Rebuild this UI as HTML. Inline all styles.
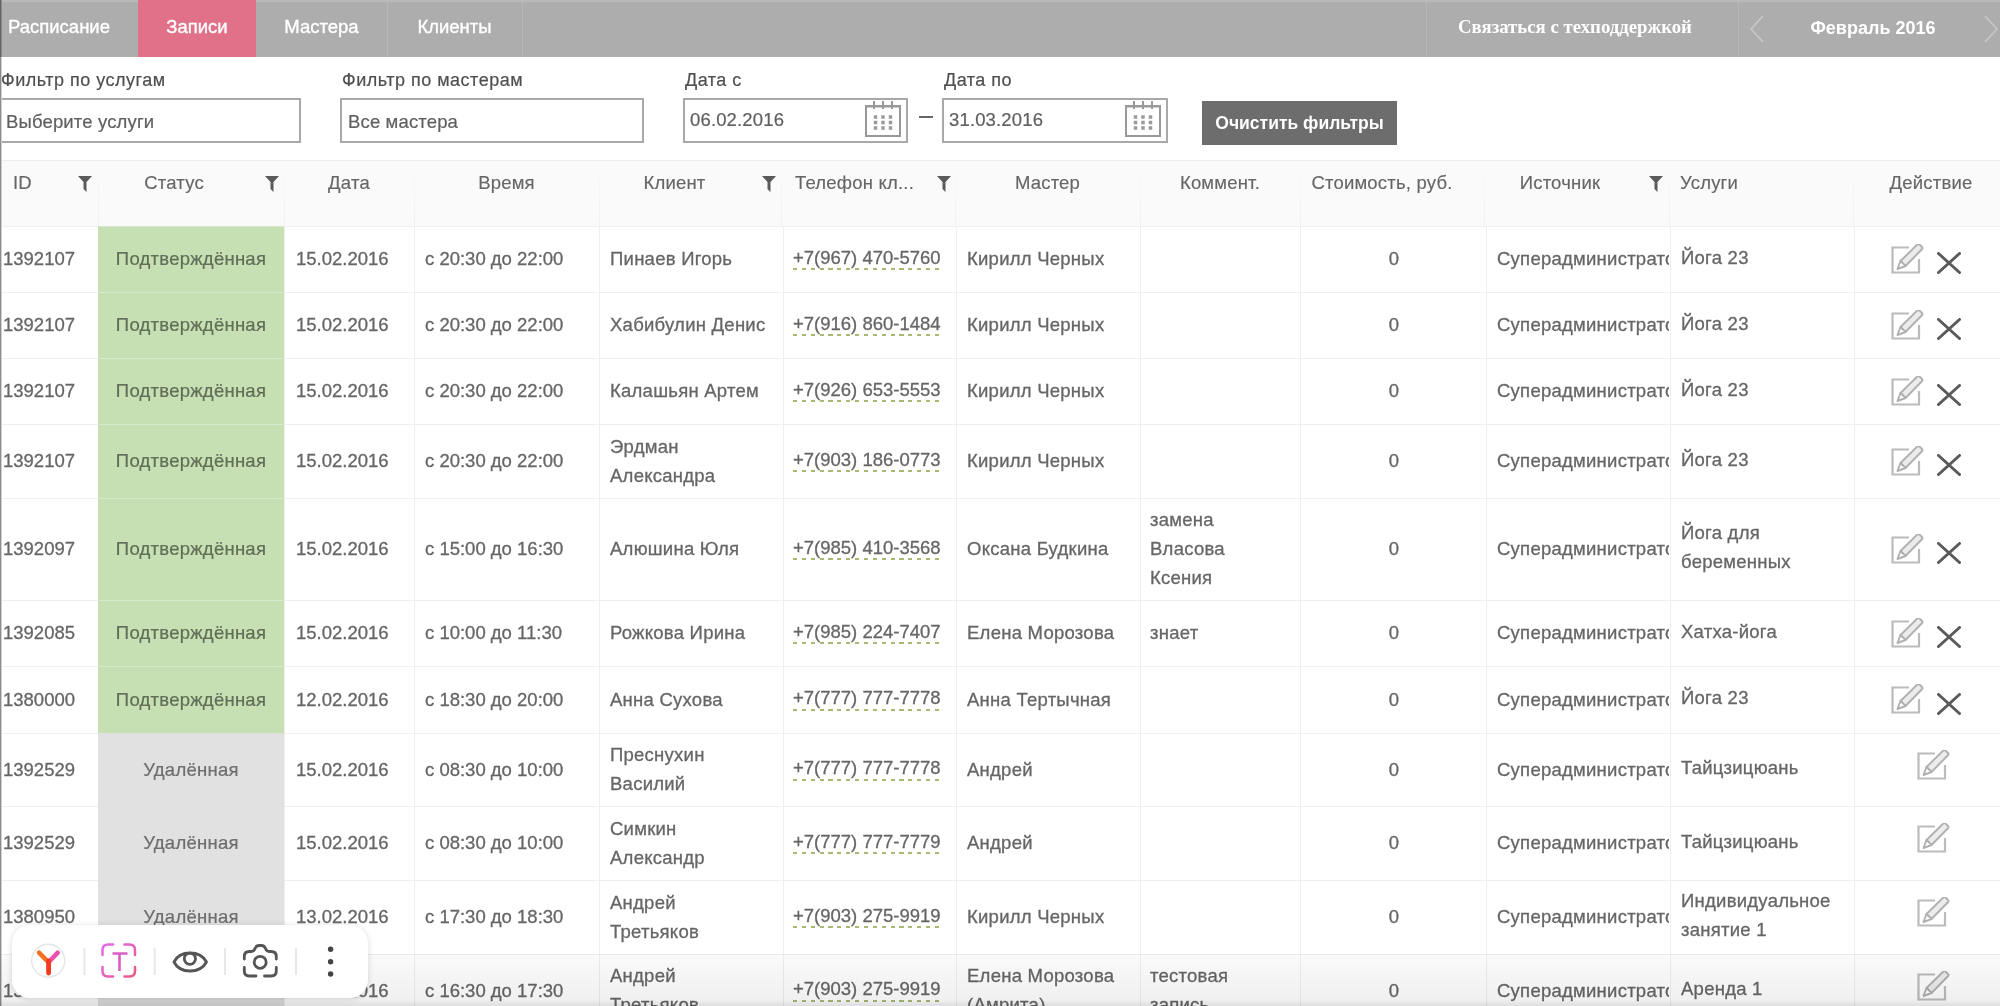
<!DOCTYPE html><html><head><meta charset="utf-8"><style>
*{margin:0;padding:0;box-sizing:border-box}
html,body{width:2000px;height:1006px;overflow:hidden;background:#fff}
body{position:relative;font-family:"Liberation Sans",sans-serif;color:#666;filter:blur(0.4px)}
.a{position:absolute}
.t{position:absolute;white-space:nowrap;font-size:18.5px;line-height:29px;letter-spacing:0.25px;-webkit-text-stroke:0.3px #666}
.dg{letter-spacing:0}
.nav{position:absolute;left:0;top:0;width:2000px;height:57px;background:#adadad}
.nt{position:absolute;top:0;height:57px;line-height:54px;color:#fff;font-size:18.5px;text-align:center;white-space:nowrap;-webkit-text-stroke:0.35px #fff}
.lbl{position:absolute;font-size:18px;color:#4f4f4f;white-space:nowrap;line-height:22px;letter-spacing:0.5px;-webkit-text-stroke:0.2px #4f4f4f}
.inp{position:absolute;border:2px solid #a9a9a9;background:#fff}
.ph{position:absolute;font-size:18.5px;color:#5f5f5f;white-space:nowrap;line-height:22px;letter-spacing:0.15px;-webkit-text-stroke:0.2px #5f5f5f}
.hd{position:absolute;top:161px;height:65px;background:#fafafa}
.ht{position:absolute;top:170px;font-size:18.5px;color:#666;white-space:nowrap;line-height:26px;letter-spacing:0.2px;-webkit-text-stroke:0.15px #666}
.cell{position:absolute;overflow:hidden}
.ph2{border-bottom:2px dashed #9ccc65;line-height:22px;display:inline-block}
</style></head><body>
<div class="nav"></div>
<div class="a" style="left:0;top:0;width:2000px;height:2px;background:#b9b9b9"></div>
<div class="a" style="left:138px;top:0;width:118px;height:57px;background:#e07189"></div>
<div class="nt" style="left:0;width:118px">Расписание</div>
<div class="nt" style="left:138px;width:118px">Записи</div>
<div class="nt" style="left:256px;width:131px">Мастера</div>
<div class="nt" style="left:387px;width:135px">Клиенты</div>
<div class="a" style="left:387px;top:2px;width:1px;height:55px;background:#b8b8b8"></div>
<div class="a" style="left:522px;top:2px;width:1px;height:55px;background:#b8b8b8"></div>
<div class="a" style="left:1426px;top:2px;width:1px;height:55px;background:#b8b8b8"></div>
<div class="a" style="left:1738px;top:2px;width:1px;height:55px;background:#b8b8b8"></div>
<div class="nt" style="left:1419px;width:312px;font-family:'Liberation Serif',serif;font-weight:bold;font-size:18.8px;-webkit-text-stroke:0;line-height:53px">Связаться с техподдержкой</div>
<div class="nt" style="left:1768px;width:210px;font-weight:bold;font-size:18px;-webkit-text-stroke:0;line-height:56px">Февраль 2016</div>
<svg class="a" style="left:1748px;top:14px" width="18" height="30"><path d="M15 2 L3 15 L15 28" fill="none" stroke="#c8c8c8" stroke-width="1.6"/></svg>
<svg class="a" style="left:1982px;top:14px" width="18" height="30"><path d="M3 2 L15 15 L3 28" fill="none" stroke="#c8c8c8" stroke-width="1.6"/></svg>
<div class="lbl" style="left:1px;top:69px">Фильтр по услугам</div>
<div class="inp" style="left:0;top:98px;width:301px;height:45px"></div>
<div class="ph" style="left:6px;top:111px">Выберите услуги</div>
<div class="lbl" style="left:342px;top:69px">Фильтр по мастерам</div>
<div class="inp" style="left:340px;top:98px;width:304px;height:45px"></div>
<div class="ph" style="left:348px;top:111px">Все мастера</div>
<div class="lbl" style="left:685px;top:69px">Дата с</div>
<div class="inp" style="left:683px;top:98px;width:225px;height:45px"></div>
<div class="ph" style="left:690px;top:109px">06.02.2016</div>
<div class="lbl" style="left:944px;top:69px">Дата по</div>
<div class="inp" style="left:942px;top:98px;width:226px;height:45px"></div>
<div class="ph" style="left:949px;top:109px">31.03.2016</div>
<div class="a" style="left:919px;top:116px;width:14px;height:2px;background:#666"></div>
<svg class="a" style="left:865px;top:101px" width="36" height="36" viewBox="0 0 36 36"><rect x="1" y="5" width="34" height="30" fill="none" stroke="#999" stroke-width="2"/><line x1="9" y1="0" x2="9" y2="8" stroke="#999" stroke-width="2"/><line x1="18" y1="0" x2="18" y2="8" stroke="#999" stroke-width="2"/><line x1="27" y1="0" x2="27" y2="8" stroke="#999" stroke-width="2"/><line x1="1" y1="6" x2="35" y2="6" stroke="#999" stroke-width="1"/><rect x="8.75" y="14.25" width="3.5" height="3.5" fill="#9a9a9a"/><rect x="16.25" y="14.25" width="3.5" height="3.5" fill="#9a9a9a"/><rect x="23.75" y="14.25" width="3.5" height="3.5" fill="#9a9a9a"/><rect x="8.75" y="19.75" width="3.5" height="3.5" fill="#9a9a9a"/><rect x="16.25" y="19.75" width="3.5" height="3.5" fill="#9a9a9a"/><rect x="23.75" y="19.75" width="3.5" height="3.5" fill="#9a9a9a"/><rect x="8.75" y="25.25" width="3.5" height="3.5" fill="#9a9a9a"/><rect x="16.25" y="25.25" width="3.5" height="3.5" fill="#9a9a9a"/><rect x="23.75" y="25.25" width="3.5" height="3.5" fill="#9a9a9a"/></svg>
<svg class="a" style="left:1125px;top:101px" width="36" height="36" viewBox="0 0 36 36"><rect x="1" y="5" width="34" height="30" fill="none" stroke="#999" stroke-width="2"/><line x1="9" y1="0" x2="9" y2="8" stroke="#999" stroke-width="2"/><line x1="18" y1="0" x2="18" y2="8" stroke="#999" stroke-width="2"/><line x1="27" y1="0" x2="27" y2="8" stroke="#999" stroke-width="2"/><line x1="1" y1="6" x2="35" y2="6" stroke="#999" stroke-width="1"/><rect x="8.75" y="14.25" width="3.5" height="3.5" fill="#9a9a9a"/><rect x="16.25" y="14.25" width="3.5" height="3.5" fill="#9a9a9a"/><rect x="23.75" y="14.25" width="3.5" height="3.5" fill="#9a9a9a"/><rect x="8.75" y="19.75" width="3.5" height="3.5" fill="#9a9a9a"/><rect x="16.25" y="19.75" width="3.5" height="3.5" fill="#9a9a9a"/><rect x="23.75" y="19.75" width="3.5" height="3.5" fill="#9a9a9a"/><rect x="8.75" y="25.25" width="3.5" height="3.5" fill="#9a9a9a"/><rect x="16.25" y="25.25" width="3.5" height="3.5" fill="#9a9a9a"/><rect x="23.75" y="25.25" width="3.5" height="3.5" fill="#9a9a9a"/></svg>
<div class="a" style="left:1202px;top:101px;width:195px;height:44px;background:#6d6d6d"></div>
<div class="a" style="left:1202px;top:101px;width:195px;height:44px;line-height:44px;text-align:center;color:#fff;font-weight:bold;font-size:17.5px;white-space:nowrap">Очистить фильтры</div>
<div class="a" style="left:0;top:160px;width:2000px;height:1px;background:#f1ebeb"></div>
<div class="hd" style="left:0;width:2000px"></div>
<div class="a" style="left:98px;top:161px;width:1px;height:65px;background:linear-gradient(#fafafa,#f0f0f0)"></div>
<div class="a" style="left:284px;top:161px;width:1px;height:65px;background:linear-gradient(#fafafa,#f0f0f0)"></div>
<div class="a" style="left:414px;top:161px;width:1px;height:65px;background:linear-gradient(#fafafa,#f0f0f0)"></div>
<div class="a" style="left:599px;top:161px;width:1px;height:65px;background:linear-gradient(#fafafa,#f0f0f0)"></div>
<div class="a" style="left:781px;top:161px;width:1px;height:65px;background:linear-gradient(#fafafa,#f0f0f0)"></div>
<div class="a" style="left:955px;top:161px;width:1px;height:65px;background:linear-gradient(#fafafa,#f0f0f0)"></div>
<div class="a" style="left:1140px;top:161px;width:1px;height:65px;background:linear-gradient(#fafafa,#f0f0f0)"></div>
<div class="a" style="left:1300px;top:161px;width:1px;height:65px;background:linear-gradient(#fafafa,#f0f0f0)"></div>
<div class="a" style="left:1484px;top:161px;width:1px;height:65px;background:linear-gradient(#fafafa,#f0f0f0)"></div>
<div class="a" style="left:1669px;top:161px;width:1px;height:65px;background:linear-gradient(#fafafa,#f0f0f0)"></div>
<div class="a" style="left:1853px;top:161px;width:1px;height:65px;background:linear-gradient(#fafafa,#f0f0f0)"></div>
<div class="ht" style="left:13px">ID</div>
<div class="ht" style="left:98px;width:152px;text-align:center">Статус</div>
<div class="ht" style="left:284px;width:130px;text-align:center">Дата</div>
<div class="ht" style="left:414px;width:185px;text-align:center">Время</div>
<div class="ht" style="left:599px;width:151px;text-align:center">Клиент</div>
<div class="ht" style="left:795px">Телефон кл...</div>
<div class="ht" style="left:955px;width:185px;text-align:center">Мастер</div>
<div class="ht" style="left:1140px;width:160px;text-align:center">Коммент.</div>
<div class="ht" style="left:1300px;width:164px;text-align:center">Стоимость, руб.</div>
<div class="ht" style="left:1484px;width:152px;text-align:center">Источник</div>
<div class="ht" style="left:1680px">Услуги</div>
<div class="ht" style="left:1862px;width:138px;text-align:center">Действие</div>
<svg class="a" style="left:78px;top:176px" width="14" height="16" viewBox="0 0 14 16"><path d="M0 0 H14 L8.5 6 V16 L5.5 13 V6 Z" fill="#5a5a5a"/></svg>
<svg class="a" style="left:265px;top:176px" width="14" height="16" viewBox="0 0 14 16"><path d="M0 0 H14 L8.5 6 V16 L5.5 13 V6 Z" fill="#5a5a5a"/></svg>
<svg class="a" style="left:762px;top:176px" width="14" height="16" viewBox="0 0 14 16"><path d="M0 0 H14 L8.5 6 V16 L5.5 13 V6 Z" fill="#5a5a5a"/></svg>
<svg class="a" style="left:937px;top:176px" width="14" height="16" viewBox="0 0 14 16"><path d="M0 0 H14 L8.5 6 V16 L5.5 13 V6 Z" fill="#5a5a5a"/></svg>
<svg class="a" style="left:1649px;top:176px" width="14" height="16" viewBox="0 0 14 16"><path d="M0 0 H14 L8.5 6 V16 L5.5 13 V6 Z" fill="#5a5a5a"/></svg>
<div class="a" style="left:98px;top:226px;width:1px;height:780px;background:#efefef"></div>
<div class="a" style="left:284px;top:226px;width:1px;height:780px;background:#efefef"></div>
<div class="a" style="left:414px;top:226px;width:1px;height:780px;background:#efefef"></div>
<div class="a" style="left:599px;top:226px;width:1px;height:780px;background:#efefef"></div>
<div class="a" style="left:783px;top:226px;width:1px;height:780px;background:#efefef"></div>
<div class="a" style="left:956px;top:226px;width:1px;height:780px;background:#efefef"></div>
<div class="a" style="left:1140px;top:226px;width:1px;height:780px;background:#efefef"></div>
<div class="a" style="left:1300px;top:226px;width:1px;height:780px;background:#efefef"></div>
<div class="a" style="left:1486px;top:226px;width:1px;height:780px;background:#efefef"></div>
<div class="a" style="left:1670px;top:226px;width:1px;height:780px;background:#efefef"></div>
<div class="a" style="left:1854px;top:226px;width:1px;height:780px;background:#efefef"></div>
<div class="a" style="left:0;top:226px;width:2000px;height:1px;background:#efefef"></div>
<div class="a" style="left:98px;top:227px;width:186px;height:65px;background:#c7e0b3"></div>
<div class="a" style="left:98px;top:226px;width:186px;height:1px;background:#d8e8cb"></div>
<div class="t dg" style="left:3px;top:244.0px">1392107</div>
<div class="t" style="left:98px;top:244.0px;width:186px;text-align:center;color:rgba(0,0,0,0.5);-webkit-text-stroke:0.2px rgba(0,0,0,0.5)">Подтверждённая</div>
<div class="t dg" style="left:296px;top:244.0px">15.02.2016</div>
<div class="t dg" style="left:425px;top:244.0px">с 20:30 до 22:00</div>
<div class="t" style="left:610px;top:244.0px">Пинаев Игорь</div>
<div class="t dg" style="left:793px;top:242.5px">+7(967) 470-5760</div>
<div class="a" style="left:793px;top:268.0px;width:147px;height:2px;background:repeating-linear-gradient(90deg,#a6ba74 0 4px,rgba(255,255,255,0) 4px 8.875px)"></div>
<div class="t" style="left:967px;top:244.0px">Кирилл Черных</div>
<div class="t dg" style="left:1302px;top:244.0px;width:184px;text-align:center">0</div>
<div class="t" style="left:1497px;top:244.0px;width:172px;overflow:hidden">Суперадминистратор</div>
<div class="t" style="left:1681px;top:242.5px">Йога 23</div>
<svg class="a" style="left:1891px;top:243.7px" width="34" height="32" viewBox="0 -1 34 32"><path d="M18 2.5 H1.5 V27.5 H28 V14" fill="none" stroke="#bbbbbb" stroke-width="2.2"/><path d="M9.5 16 L26.5 -0.7 Q27.5 -1.5 28.5 -0.5 L31 2 Q32 3 31.2 4 L14.5 21 Z" fill="#ececec" stroke="#b0b0b0" stroke-width="1.9" stroke-linejoin="round"/><path d="M6.5 24 L9.5 16 L14.5 21 Z" fill="#fff" stroke="#b0b0b0" stroke-width="1.9" stroke-linejoin="round"/></svg>
<svg class="a" style="left:1937px;top:252.0px" width="24" height="22" viewBox="0 0 24 22"><path d="M1.5 1.5 L22.5 20.5 M22.5 1.5 L1.5 20.5" stroke="#5a5a5a" stroke-width="3" stroke-linecap="round"/></svg>
<div class="a" style="left:0;top:292px;width:2000px;height:1px;background:#efefef"></div>
<div class="a" style="left:98px;top:293px;width:186px;height:65px;background:#c7e0b3"></div>
<div class="a" style="left:98px;top:292px;width:186px;height:1px;background:#d8e8cb"></div>
<div class="t dg" style="left:3px;top:310.0px">1392107</div>
<div class="t" style="left:98px;top:310.0px;width:186px;text-align:center;color:rgba(0,0,0,0.5);-webkit-text-stroke:0.2px rgba(0,0,0,0.5)">Подтверждённая</div>
<div class="t dg" style="left:296px;top:310.0px">15.02.2016</div>
<div class="t dg" style="left:425px;top:310.0px">с 20:30 до 22:00</div>
<div class="t" style="left:610px;top:310.0px">Хабибулин Денис</div>
<div class="t dg" style="left:793px;top:308.5px">+7(916) 860-1484</div>
<div class="a" style="left:793px;top:334.0px;width:147px;height:2px;background:repeating-linear-gradient(90deg,#a6ba74 0 4px,rgba(255,255,255,0) 4px 8.875px)"></div>
<div class="t" style="left:967px;top:310.0px">Кирилл Черных</div>
<div class="t dg" style="left:1302px;top:310.0px;width:184px;text-align:center">0</div>
<div class="t" style="left:1497px;top:310.0px;width:172px;overflow:hidden">Суперадминистратор</div>
<div class="t" style="left:1681px;top:308.5px">Йога 23</div>
<svg class="a" style="left:1891px;top:309.7px" width="34" height="32" viewBox="0 -1 34 32"><path d="M18 2.5 H1.5 V27.5 H28 V14" fill="none" stroke="#bbbbbb" stroke-width="2.2"/><path d="M9.5 16 L26.5 -0.7 Q27.5 -1.5 28.5 -0.5 L31 2 Q32 3 31.2 4 L14.5 21 Z" fill="#ececec" stroke="#b0b0b0" stroke-width="1.9" stroke-linejoin="round"/><path d="M6.5 24 L9.5 16 L14.5 21 Z" fill="#fff" stroke="#b0b0b0" stroke-width="1.9" stroke-linejoin="round"/></svg>
<svg class="a" style="left:1937px;top:318.0px" width="24" height="22" viewBox="0 0 24 22"><path d="M1.5 1.5 L22.5 20.5 M22.5 1.5 L1.5 20.5" stroke="#5a5a5a" stroke-width="3" stroke-linecap="round"/></svg>
<div class="a" style="left:0;top:358px;width:2000px;height:1px;background:#efefef"></div>
<div class="a" style="left:98px;top:359px;width:186px;height:65px;background:#c7e0b3"></div>
<div class="a" style="left:98px;top:358px;width:186px;height:1px;background:#d8e8cb"></div>
<div class="t dg" style="left:3px;top:376.0px">1392107</div>
<div class="t" style="left:98px;top:376.0px;width:186px;text-align:center;color:rgba(0,0,0,0.5);-webkit-text-stroke:0.2px rgba(0,0,0,0.5)">Подтверждённая</div>
<div class="t dg" style="left:296px;top:376.0px">15.02.2016</div>
<div class="t dg" style="left:425px;top:376.0px">с 20:30 до 22:00</div>
<div class="t" style="left:610px;top:376.0px">Калашьян Артем</div>
<div class="t dg" style="left:793px;top:374.5px">+7(926) 653-5553</div>
<div class="a" style="left:793px;top:400.0px;width:147px;height:2px;background:repeating-linear-gradient(90deg,#a6ba74 0 4px,rgba(255,255,255,0) 4px 8.875px)"></div>
<div class="t" style="left:967px;top:376.0px">Кирилл Черных</div>
<div class="t dg" style="left:1302px;top:376.0px;width:184px;text-align:center">0</div>
<div class="t" style="left:1497px;top:376.0px;width:172px;overflow:hidden">Суперадминистратор</div>
<div class="t" style="left:1681px;top:374.5px">Йога 23</div>
<svg class="a" style="left:1891px;top:375.7px" width="34" height="32" viewBox="0 -1 34 32"><path d="M18 2.5 H1.5 V27.5 H28 V14" fill="none" stroke="#bbbbbb" stroke-width="2.2"/><path d="M9.5 16 L26.5 -0.7 Q27.5 -1.5 28.5 -0.5 L31 2 Q32 3 31.2 4 L14.5 21 Z" fill="#ececec" stroke="#b0b0b0" stroke-width="1.9" stroke-linejoin="round"/><path d="M6.5 24 L9.5 16 L14.5 21 Z" fill="#fff" stroke="#b0b0b0" stroke-width="1.9" stroke-linejoin="round"/></svg>
<svg class="a" style="left:1937px;top:384.0px" width="24" height="22" viewBox="0 0 24 22"><path d="M1.5 1.5 L22.5 20.5 M22.5 1.5 L1.5 20.5" stroke="#5a5a5a" stroke-width="3" stroke-linecap="round"/></svg>
<div class="a" style="left:0;top:424px;width:2000px;height:1px;background:#efefef"></div>
<div class="a" style="left:98px;top:425px;width:186px;height:73px;background:#c7e0b3"></div>
<div class="a" style="left:98px;top:424px;width:186px;height:1px;background:#d8e8cb"></div>
<div class="t dg" style="left:3px;top:446.0px">1392107</div>
<div class="t" style="left:98px;top:446.0px;width:186px;text-align:center;color:rgba(0,0,0,0.5);-webkit-text-stroke:0.2px rgba(0,0,0,0.5)">Подтверждённая</div>
<div class="t dg" style="left:296px;top:446.0px">15.02.2016</div>
<div class="t dg" style="left:425px;top:446.0px">с 20:30 до 22:00</div>
<div class="t" style="left:610px;top:431.5px">Эрдман<br>Александра</div>
<div class="t dg" style="left:793px;top:444.5px">+7(903) 186-0773</div>
<div class="a" style="left:793px;top:470.0px;width:147px;height:2px;background:repeating-linear-gradient(90deg,#a6ba74 0 4px,rgba(255,255,255,0) 4px 8.875px)"></div>
<div class="t" style="left:967px;top:446.0px">Кирилл Черных</div>
<div class="t dg" style="left:1302px;top:446.0px;width:184px;text-align:center">0</div>
<div class="t" style="left:1497px;top:446.0px;width:172px;overflow:hidden">Суперадминистратор</div>
<div class="t" style="left:1681px;top:444.5px">Йога 23</div>
<svg class="a" style="left:1891px;top:445.7px" width="34" height="32" viewBox="0 -1 34 32"><path d="M18 2.5 H1.5 V27.5 H28 V14" fill="none" stroke="#bbbbbb" stroke-width="2.2"/><path d="M9.5 16 L26.5 -0.7 Q27.5 -1.5 28.5 -0.5 L31 2 Q32 3 31.2 4 L14.5 21 Z" fill="#ececec" stroke="#b0b0b0" stroke-width="1.9" stroke-linejoin="round"/><path d="M6.5 24 L9.5 16 L14.5 21 Z" fill="#fff" stroke="#b0b0b0" stroke-width="1.9" stroke-linejoin="round"/></svg>
<svg class="a" style="left:1937px;top:454.0px" width="24" height="22" viewBox="0 0 24 22"><path d="M1.5 1.5 L22.5 20.5 M22.5 1.5 L1.5 20.5" stroke="#5a5a5a" stroke-width="3" stroke-linecap="round"/></svg>
<div class="a" style="left:0;top:498px;width:2000px;height:1px;background:#efefef"></div>
<div class="a" style="left:98px;top:499px;width:186px;height:101px;background:#c7e0b3"></div>
<div class="a" style="left:98px;top:498px;width:186px;height:1px;background:#d8e8cb"></div>
<div class="t dg" style="left:3px;top:534.0px">1392097</div>
<div class="t" style="left:98px;top:534.0px;width:186px;text-align:center;color:rgba(0,0,0,0.5);-webkit-text-stroke:0.2px rgba(0,0,0,0.5)">Подтверждённая</div>
<div class="t dg" style="left:296px;top:534.0px">15.02.2016</div>
<div class="t dg" style="left:425px;top:534.0px">с 15:00 до 16:30</div>
<div class="t" style="left:610px;top:534.0px">Алюшина Юля</div>
<div class="t dg" style="left:793px;top:532.5px">+7(985) 410-3568</div>
<div class="a" style="left:793px;top:558.0px;width:147px;height:2px;background:repeating-linear-gradient(90deg,#a6ba74 0 4px,rgba(255,255,255,0) 4px 8.875px)"></div>
<div class="t" style="left:967px;top:534.0px">Оксана Будкина</div>
<div class="t" style="left:1150px;top:505.0px">замена<br>Власова<br>Ксения</div>
<div class="t dg" style="left:1302px;top:534.0px;width:184px;text-align:center">0</div>
<div class="t" style="left:1497px;top:534.0px;width:172px;overflow:hidden">Суперадминистратор</div>
<div class="t" style="left:1681px;top:518.0px">Йога для<br>беременных</div>
<svg class="a" style="left:1891px;top:533.7px" width="34" height="32" viewBox="0 -1 34 32"><path d="M18 2.5 H1.5 V27.5 H28 V14" fill="none" stroke="#bbbbbb" stroke-width="2.2"/><path d="M9.5 16 L26.5 -0.7 Q27.5 -1.5 28.5 -0.5 L31 2 Q32 3 31.2 4 L14.5 21 Z" fill="#ececec" stroke="#b0b0b0" stroke-width="1.9" stroke-linejoin="round"/><path d="M6.5 24 L9.5 16 L14.5 21 Z" fill="#fff" stroke="#b0b0b0" stroke-width="1.9" stroke-linejoin="round"/></svg>
<svg class="a" style="left:1937px;top:542.0px" width="24" height="22" viewBox="0 0 24 22"><path d="M1.5 1.5 L22.5 20.5 M22.5 1.5 L1.5 20.5" stroke="#5a5a5a" stroke-width="3" stroke-linecap="round"/></svg>
<div class="a" style="left:0;top:600px;width:2000px;height:1px;background:#efefef"></div>
<div class="a" style="left:98px;top:601px;width:186px;height:65px;background:#c7e0b3"></div>
<div class="a" style="left:98px;top:600px;width:186px;height:1px;background:#d8e8cb"></div>
<div class="t dg" style="left:3px;top:618.0px">1392085</div>
<div class="t" style="left:98px;top:618.0px;width:186px;text-align:center;color:rgba(0,0,0,0.5);-webkit-text-stroke:0.2px rgba(0,0,0,0.5)">Подтверждённая</div>
<div class="t dg" style="left:296px;top:618.0px">15.02.2016</div>
<div class="t dg" style="left:425px;top:618.0px">с 10:00 до 11:30</div>
<div class="t" style="left:610px;top:618.0px">Рожкова Ирина</div>
<div class="t dg" style="left:793px;top:616.5px">+7(985) 224-7407</div>
<div class="a" style="left:793px;top:642.0px;width:147px;height:2px;background:repeating-linear-gradient(90deg,#a6ba74 0 4px,rgba(255,255,255,0) 4px 8.875px)"></div>
<div class="t" style="left:967px;top:618.0px">Елена Морозова</div>
<div class="t" style="left:1150px;top:618.0px">знает</div>
<div class="t dg" style="left:1302px;top:618.0px;width:184px;text-align:center">0</div>
<div class="t" style="left:1497px;top:618.0px;width:172px;overflow:hidden">Суперадминистратор</div>
<div class="t" style="left:1681px;top:616.5px">Хатха-йога</div>
<svg class="a" style="left:1891px;top:617.7px" width="34" height="32" viewBox="0 -1 34 32"><path d="M18 2.5 H1.5 V27.5 H28 V14" fill="none" stroke="#bbbbbb" stroke-width="2.2"/><path d="M9.5 16 L26.5 -0.7 Q27.5 -1.5 28.5 -0.5 L31 2 Q32 3 31.2 4 L14.5 21 Z" fill="#ececec" stroke="#b0b0b0" stroke-width="1.9" stroke-linejoin="round"/><path d="M6.5 24 L9.5 16 L14.5 21 Z" fill="#fff" stroke="#b0b0b0" stroke-width="1.9" stroke-linejoin="round"/></svg>
<svg class="a" style="left:1937px;top:626.0px" width="24" height="22" viewBox="0 0 24 22"><path d="M1.5 1.5 L22.5 20.5 M22.5 1.5 L1.5 20.5" stroke="#5a5a5a" stroke-width="3" stroke-linecap="round"/></svg>
<div class="a" style="left:0;top:666px;width:2000px;height:1px;background:#efefef"></div>
<div class="a" style="left:98px;top:667px;width:186px;height:66px;background:#c7e0b3"></div>
<div class="a" style="left:98px;top:666px;width:186px;height:1px;background:#d8e8cb"></div>
<div class="t dg" style="left:3px;top:684.5px">1380000</div>
<div class="t" style="left:98px;top:684.5px;width:186px;text-align:center;color:rgba(0,0,0,0.5);-webkit-text-stroke:0.2px rgba(0,0,0,0.5)">Подтверждённая</div>
<div class="t dg" style="left:296px;top:684.5px">12.02.2016</div>
<div class="t dg" style="left:425px;top:684.5px">с 18:30 до 20:00</div>
<div class="t" style="left:610px;top:684.5px">Анна Сухова</div>
<div class="t dg" style="left:793px;top:683.0px">+7(777) 777-7778</div>
<div class="a" style="left:793px;top:708.5px;width:147px;height:2px;background:repeating-linear-gradient(90deg,#a6ba74 0 4px,rgba(255,255,255,0) 4px 8.875px)"></div>
<div class="t" style="left:967px;top:684.5px">Анна Тертычная</div>
<div class="t dg" style="left:1302px;top:684.5px;width:184px;text-align:center">0</div>
<div class="t" style="left:1497px;top:684.5px;width:172px;overflow:hidden">Суперадминистратор</div>
<div class="t" style="left:1681px;top:683.0px">Йога 23</div>
<svg class="a" style="left:1891px;top:684.2px" width="34" height="32" viewBox="0 -1 34 32"><path d="M18 2.5 H1.5 V27.5 H28 V14" fill="none" stroke="#bbbbbb" stroke-width="2.2"/><path d="M9.5 16 L26.5 -0.7 Q27.5 -1.5 28.5 -0.5 L31 2 Q32 3 31.2 4 L14.5 21 Z" fill="#ececec" stroke="#b0b0b0" stroke-width="1.9" stroke-linejoin="round"/><path d="M6.5 24 L9.5 16 L14.5 21 Z" fill="#fff" stroke="#b0b0b0" stroke-width="1.9" stroke-linejoin="round"/></svg>
<svg class="a" style="left:1937px;top:692.5px" width="24" height="22" viewBox="0 0 24 22"><path d="M1.5 1.5 L22.5 20.5 M22.5 1.5 L1.5 20.5" stroke="#5a5a5a" stroke-width="3" stroke-linecap="round"/></svg>
<div class="a" style="left:0;top:733px;width:2000px;height:1px;background:#efefef"></div>
<div class="a" style="left:98px;top:733px;width:186px;height:73px;background:#e1e1e1"></div>
<div class="t dg" style="left:3px;top:754.5px">1392529</div>
<div class="t" style="left:98px;top:754.5px;width:186px;text-align:center;color:rgba(0,0,0,0.5);-webkit-text-stroke:0.2px rgba(0,0,0,0.5)">Удалённая</div>
<div class="t dg" style="left:296px;top:754.5px">15.02.2016</div>
<div class="t dg" style="left:425px;top:754.5px">с 08:30 до 10:00</div>
<div class="t" style="left:610px;top:740.0px">Преснухин<br>Василий</div>
<div class="t dg" style="left:793px;top:753.0px">+7(777) 777-7778</div>
<div class="a" style="left:793px;top:778.5px;width:147px;height:2px;background:repeating-linear-gradient(90deg,#a6ba74 0 4px,rgba(255,255,255,0) 4px 8.875px)"></div>
<div class="t" style="left:967px;top:754.5px">Андрей</div>
<div class="t dg" style="left:1302px;top:754.5px;width:184px;text-align:center">0</div>
<div class="t" style="left:1497px;top:754.5px;width:172px;overflow:hidden">Суперадминистратор</div>
<div class="t" style="left:1681px;top:753.0px">Тайцзицюань</div>
<svg class="a" style="left:1917px;top:749.9px" width="34" height="32" viewBox="0 -1 34 32"><path d="M18 2.5 H1.5 V27.5 H28 V14" fill="none" stroke="#bbbbbb" stroke-width="2.2"/><path d="M9.5 16 L26.5 -0.7 Q27.5 -1.5 28.5 -0.5 L31 2 Q32 3 31.2 4 L14.5 21 Z" fill="#ececec" stroke="#b0b0b0" stroke-width="1.9" stroke-linejoin="round"/><path d="M6.5 24 L9.5 16 L14.5 21 Z" fill="#fff" stroke="#b0b0b0" stroke-width="1.9" stroke-linejoin="round"/></svg>
<div class="a" style="left:0;top:806px;width:2000px;height:1px;background:#efefef"></div>
<div class="a" style="left:98px;top:806px;width:186px;height:74px;background:#e1e1e1"></div>
<div class="t dg" style="left:3px;top:828.0px">1392529</div>
<div class="t" style="left:98px;top:828.0px;width:186px;text-align:center;color:rgba(0,0,0,0.5);-webkit-text-stroke:0.2px rgba(0,0,0,0.5)">Удалённая</div>
<div class="t dg" style="left:296px;top:828.0px">15.02.2016</div>
<div class="t dg" style="left:425px;top:828.0px">с 08:30 до 10:00</div>
<div class="t" style="left:610px;top:813.5px">Симкин<br>Александр</div>
<div class="t dg" style="left:793px;top:826.5px">+7(777) 777-7779</div>
<div class="a" style="left:793px;top:852.0px;width:147px;height:2px;background:repeating-linear-gradient(90deg,#a6ba74 0 4px,rgba(255,255,255,0) 4px 8.875px)"></div>
<div class="t" style="left:967px;top:828.0px">Андрей</div>
<div class="t dg" style="left:1302px;top:828.0px;width:184px;text-align:center">0</div>
<div class="t" style="left:1497px;top:828.0px;width:172px;overflow:hidden">Суперадминистратор</div>
<div class="t" style="left:1681px;top:826.5px">Тайцзицюань</div>
<svg class="a" style="left:1917px;top:823.4px" width="34" height="32" viewBox="0 -1 34 32"><path d="M18 2.5 H1.5 V27.5 H28 V14" fill="none" stroke="#bbbbbb" stroke-width="2.2"/><path d="M9.5 16 L26.5 -0.7 Q27.5 -1.5 28.5 -0.5 L31 2 Q32 3 31.2 4 L14.5 21 Z" fill="#ececec" stroke="#b0b0b0" stroke-width="1.9" stroke-linejoin="round"/><path d="M6.5 24 L9.5 16 L14.5 21 Z" fill="#fff" stroke="#b0b0b0" stroke-width="1.9" stroke-linejoin="round"/></svg>
<div class="a" style="left:0;top:880px;width:2000px;height:1px;background:#efefef"></div>
<div class="a" style="left:98px;top:880px;width:186px;height:74px;background:#e1e1e1"></div>
<div class="t dg" style="left:3px;top:902.0px">1380950</div>
<div class="t" style="left:98px;top:902.0px;width:186px;text-align:center;color:rgba(0,0,0,0.5);-webkit-text-stroke:0.2px rgba(0,0,0,0.5)">Удалённая</div>
<div class="t dg" style="left:296px;top:902.0px">13.02.2016</div>
<div class="t dg" style="left:425px;top:902.0px">с 17:30 до 18:30</div>
<div class="t" style="left:610px;top:887.5px">Андрей<br>Третьяков</div>
<div class="t dg" style="left:793px;top:900.5px">+7(903) 275-9919</div>
<div class="a" style="left:793px;top:926.0px;width:147px;height:2px;background:repeating-linear-gradient(90deg,#a6ba74 0 4px,rgba(255,255,255,0) 4px 8.875px)"></div>
<div class="t" style="left:967px;top:902.0px">Кирилл Черных</div>
<div class="t dg" style="left:1302px;top:902.0px;width:184px;text-align:center">0</div>
<div class="t" style="left:1497px;top:902.0px;width:172px;overflow:hidden">Суперадминистратор</div>
<div class="t" style="left:1681px;top:886.0px">Индивидуальное<br>занятие 1</div>
<svg class="a" style="left:1917px;top:897.4px" width="34" height="32" viewBox="0 -1 34 32"><path d="M18 2.5 H1.5 V27.5 H28 V14" fill="none" stroke="#bbbbbb" stroke-width="2.2"/><path d="M9.5 16 L26.5 -0.7 Q27.5 -1.5 28.5 -0.5 L31 2 Q32 3 31.2 4 L14.5 21 Z" fill="#ececec" stroke="#b0b0b0" stroke-width="1.9" stroke-linejoin="round"/><path d="M6.5 24 L9.5 16 L14.5 21 Z" fill="#fff" stroke="#b0b0b0" stroke-width="1.9" stroke-linejoin="round"/></svg>
<div class="a" style="left:0;top:954px;width:2000px;height:1px;background:#efefef"></div>
<div class="a" style="left:98px;top:954px;width:186px;height:73px;background:#e1e1e1"></div>
<div class="t dg" style="left:3px;top:975.5px">1380949</div>
<div class="t dg" style="left:296px;top:975.5px">13.02.2016</div>
<div class="t dg" style="left:425px;top:975.5px">с 16:30 до 17:30</div>
<div class="t" style="left:610px;top:961.0px">Андрей<br>Третьяков</div>
<div class="t dg" style="left:793px;top:974.0px">+7(903) 275-9919</div>
<div class="a" style="left:793px;top:999.5px;width:147px;height:2px;background:repeating-linear-gradient(90deg,#a6ba74 0 4px,rgba(255,255,255,0) 4px 8.875px)"></div>
<div class="t" style="left:967px;top:961.0px">Елена Морозова<br>(Амрита)</div>
<div class="t" style="left:1150px;top:961.0px">тестовая<br>запись</div>
<div class="t dg" style="left:1302px;top:975.5px;width:184px;text-align:center">0</div>
<div class="t" style="left:1497px;top:975.5px;width:172px;overflow:hidden">Суперадминистратор</div>
<div class="t" style="left:1681px;top:974.0px">Аренда 1</div>
<svg class="a" style="left:1917px;top:970.9px" width="34" height="32" viewBox="0 -1 34 32"><path d="M18 2.5 H1.5 V27.5 H28 V14" fill="none" stroke="#bbbbbb" stroke-width="2.2"/><path d="M9.5 16 L26.5 -0.7 Q27.5 -1.5 28.5 -0.5 L31 2 Q32 3 31.2 4 L14.5 21 Z" fill="#ececec" stroke="#b0b0b0" stroke-width="1.9" stroke-linejoin="round"/><path d="M6.5 24 L9.5 16 L14.5 21 Z" fill="#fff" stroke="#b0b0b0" stroke-width="1.9" stroke-linejoin="round"/></svg>
<div class="a" style="left:0;top:0;width:1px;height:57px;background:#646464"></div>
<div class="a" style="left:1px;top:0;width:1px;height:57px;background:#8a8a8a"></div>
<div class="a" style="left:0;top:57px;width:1px;height:949px;background:#8c8c8c"></div>
<div class="a" style="left:1px;top:57px;width:1px;height:949px;background:#d0d0d0"></div>
<div class="a" style="left:0;top:954px;width:2000px;height:52px;background:linear-gradient(rgba(0,0,0,0.02),rgba(0,0,0,0.06) 88%,rgba(0,0,0,0.13))"></div>
<div class="a" style="left:12px;top:925px;width:356px;height:73px;background:#fff;border-radius:18px;box-shadow:0 1px 6px rgba(0,0,0,0.15)"></div>
<svg class="a" style="left:12px;top:925px" width="356" height="73" viewBox="0 0 356 73">
<defs>
<linearGradient id="tg" x1="0" y1="0" x2="1" y2="1"><stop offset="0" stop-color="#e468ee"/><stop offset="1" stop-color="#ea5a86"/></linearGradient>
</defs>
<circle cx="36.2" cy="35.7" r="16.5" fill="#fff" stroke="#e6e6e6" stroke-width="1.4"/>
<path d="M27 27.6 L36.6 37.3" stroke="#f2701e" stroke-width="4.5" stroke-linecap="round"/>
<path d="M45.7 27.6 L36.6 37.3" stroke="#f04fae" stroke-width="4.5" stroke-linecap="round"/>
<path d="M36.6 36 V48" stroke="#f2391f" stroke-width="4.8" stroke-linecap="round"/>
<line x1="72.4" y1="23" x2="72.4" y2="50" stroke="#e8e8e8" stroke-width="2"/>
<path d="M90.5 30 V25 Q90.5 19.5 96 19.5 H101 M112.5 19.5 H117.5 Q123 19.5 123 25 V30 M123 42 V46 Q123 51.5 117.5 51.5 H112.5 M101 51.5 H96 Q90.5 51.5 90.5 46 V42" fill="none" stroke="url(#tg)" stroke-width="2.5" stroke-linecap="round"/>
<path d="M100.5 28.5 H115.5 M107.5 28.5 V46" stroke="#d95fc8" stroke-width="2.6"/>
<line x1="142.7" y1="23" x2="142.7" y2="50" stroke="#e8e8e8" stroke-width="2"/>
<path d="M162 37 C168 25 188 25 194.5 37 C188 49 168 49 162 37 Z" fill="none" stroke="#555" stroke-width="2.8" stroke-linejoin="round"/>
<circle cx="177.9" cy="33.8" r="5.6" fill="none" stroke="#555" stroke-width="2.8"/>
<line x1="213" y1="23" x2="213" y2="50" stroke="#e8e8e8" stroke-width="2"/>
<path d="M232.3 34 V31.5 Q232.3 26.5 237.3 26.5 H239.5 Q241.5 26.5 242.5 24.5 L243.3 22.8 Q244.5 20.5 247 20.5 H249.5 Q252 20.5 253.2 22.8 L254 24.5 Q255 26.5 257 26.5 H259.3 Q264.3 26.5 264.3 31.5 V34 M264.3 42.5 V46 Q264.3 51 259.3 51 H252.5 M244 51 H237.3 Q232.3 51 232.3 46 V42.5" fill="none" stroke="#555" stroke-width="2.8" stroke-linecap="round"/>
<circle cx="248.2" cy="37.3" r="6" fill="none" stroke="#555" stroke-width="2.8"/>
<line x1="284" y1="23" x2="284" y2="50" stroke="#e8e8e8" stroke-width="2"/>
<circle cx="318.6" cy="24.2" r="2.7" fill="#444"/><circle cx="318.6" cy="36.8" r="2.7" fill="#444"/><circle cx="318.6" cy="49" r="2.7" fill="#444"/>
</svg>
</body></html>
